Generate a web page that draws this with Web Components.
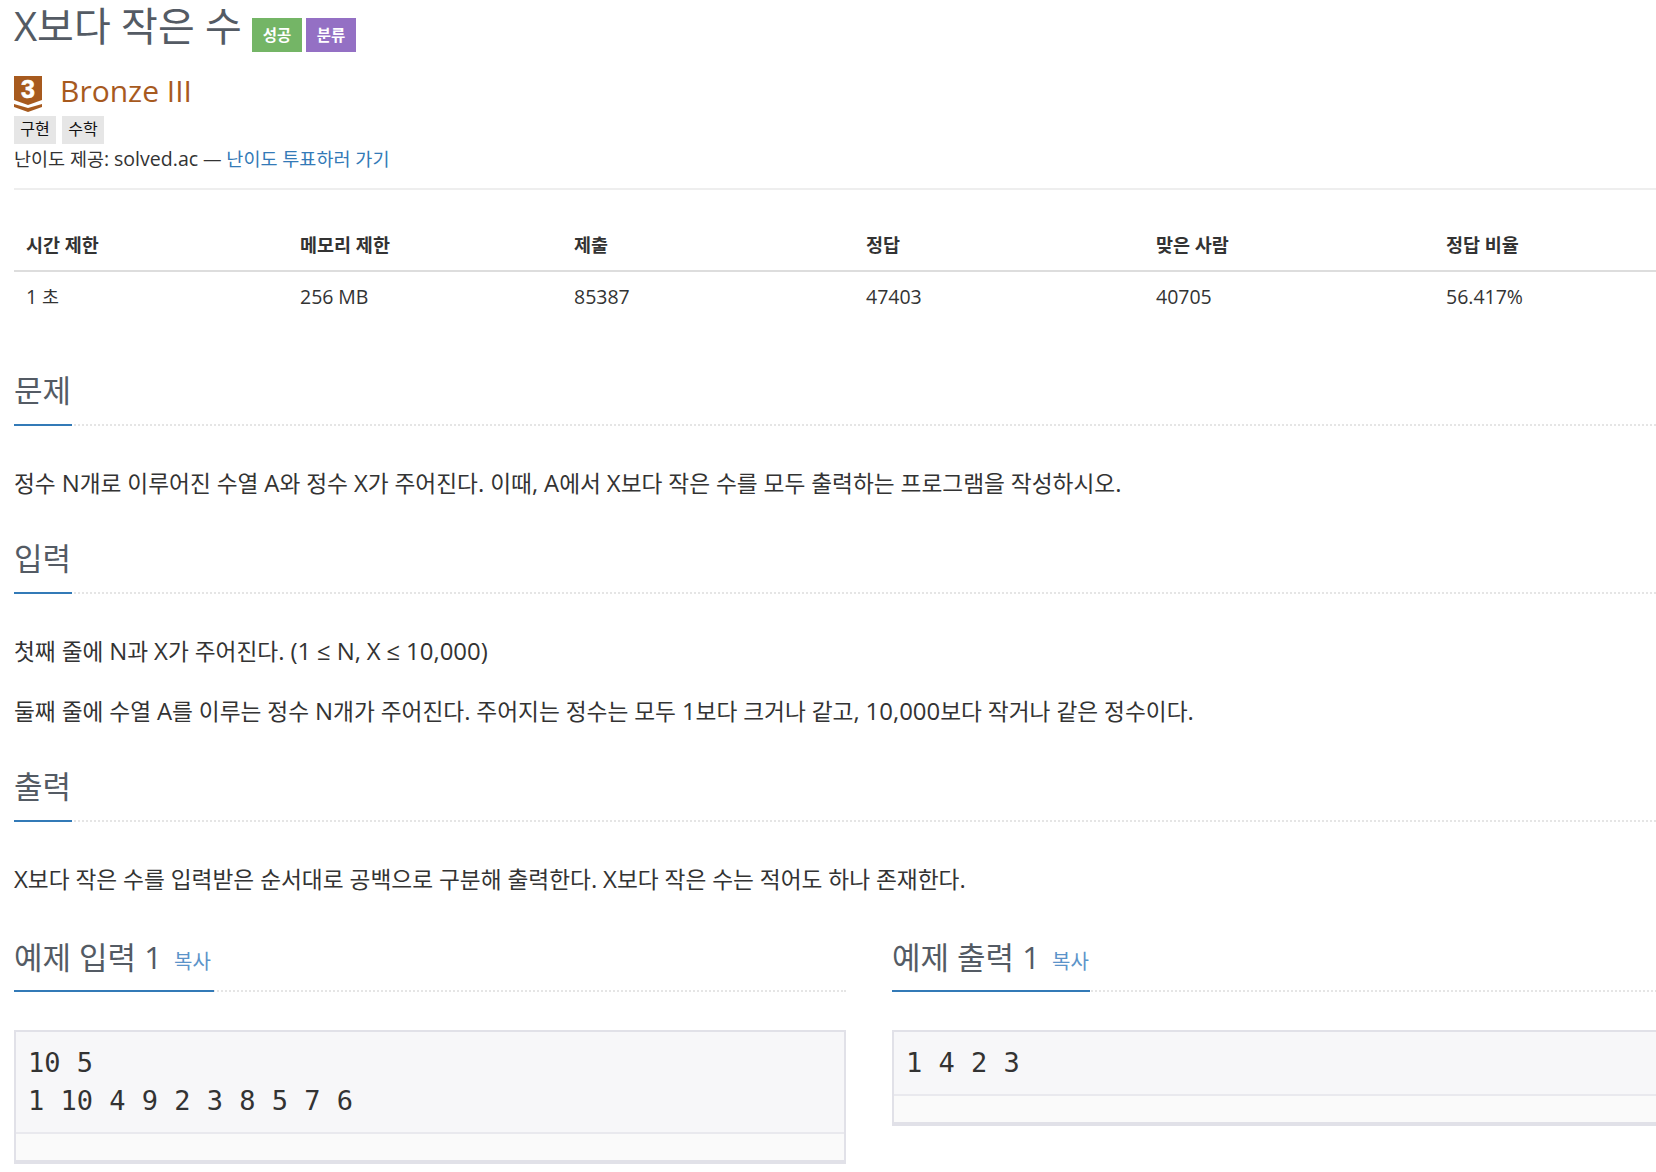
<!DOCTYPE html>
<html>
<head>
<meta charset="utf-8">
<title>X보다 작은 수</title>
<style>
    html, body {
        margin: 0;
        overflow: hidden;
        background: #fff;
    }
    body {
        width: 1710px;
        padding-left: 14px;
        font-family: "Open Sans", "Noto Sans CJK KR", sans-serif;
        color: #333;
    }
</style>
</head>
<body>
<problem-title>X보다 작은 수
    <label-badge color="#74b566">성공</label-badge>
    <label-badge color="#9470c4">분류</label-badge>
</problem-title>
<tier-line>Bronze III</tier-line>
<tag-list>
    <algo-tag>구현</algo-tag>
    <algo-tag>수학</algo-tag>
</tag-list>
<credit-line><latin-text>난이도 제공: solved.ac —</latin-text> <a slot="link">난이도 투표하러 가기</a></credit-line>
<stat-table></stat-table>
<problem-section heading="문제">
    <p><latin-text>정수 N개로 이루어진 수열 A와 정수 X가 주어진다. 이때, A에서 X보다 작은 수를 모두 출력하는 프로그램을 작성하시오.</latin-text></p>
</problem-section>
<problem-section heading="입력">
    <p><latin-text>첫째 줄에 N과 X가 주어진다. (1 ≤ N, X ≤ 10,000)</latin-text></p>
    <p><latin-text>둘째 줄에 수열 A를 이루는 정수 N개가 주어진다. 주어지는 정수는 모두 1보다 크거나 같고, 10,000보다 작거나 같은 정수이다.</latin-text></p>
</problem-section>
<problem-section heading="출력">
    <p><latin-text>X보다 작은 수를 입력받은 순서대로 공백으로 구분해 출력한다. X보다 작은 수는 적어도 하나 존재한다.</latin-text></p>
</problem-section>
<sample-row>
    <sample-box heading="예제 입력 1">10 5
1 10 4 9 2 3 8 5 7 6</sample-box>
    <sample-box heading="예제 출력 1">1 4 2 3</sample-box>
</sample-row>

<script>
    function define(name, html, setup) {
        customElements.define(name, class extends HTMLElement {
            constructor() {
                super();
                let shadowRoot = this.attachShadow({mode: 'open'});
                const t = document.createElement('template');
                t.innerHTML = html;
                shadowRoot.appendChild(t.content.cloneNode(true));
            }
            connectedCallback() {
                if (setup) setup(this, this.shadowRoot);
            }
        });
    }

    // latin runs sit a little larger than the hangul around them
    define('latin-text', `
        <style>
            :host { display: inline; }
            .en { font-size: 1.055em; line-height: 1; }
        </style>
        <span id="out"></span>`,
        (el, root) => {
            root.querySelector('#out').innerHTML = el.textContent.replace(/[A-Za-z0-9.,:%()≤]+/g, '<span class="en">$&</span>');
        });

    define('problem-title', `
        <style>
            :host { display: flex; align-items: flex-start; height: 52px; }
            h1 { margin: 0; font-size: 40px; font-weight: 400; line-height: 52px; color: #545b64; display: flex; }
            .badges { display: flex; gap: 4px; margin: 18px 0 0 10px; }
        </style>
        <h1><slot id="name"></slot></h1>
        <span class="badges"><slot name="badges"></slot></span>`,
        (el) => {
            el.querySelectorAll('label-badge').forEach(b => b.slot = 'badges');
        });

    define('label-badge', `
        <style>
            :host { display: block; width: 50px; height: 34px; text-align: center; font-size: 15.5px; font-weight: 700; line-height: 34px; color: #fff; }
        </style>
        <slot></slot>`,
        (el) => { el.style.background = el.getAttribute('color'); });

    define('tier-line', `
        <style>
            :host { display: flex; align-items: center; gap: 18px; height: 44px; margin-top: 16px; margin-bottom: 4px; color: #a75a1e; font-size: 30px; }
            svg { display: block; width: 28px; height: 36px; flex: none; margin-top: 8px; }
        </style>
        <svg viewBox="0 0 28 36">
            <path fill="#a75a1e" d="M0 0H28V24L14 29L0 24Z"/>
            <path fill="#a75a1e" d="M0 28L14 32L28 28V31L14 36L0 31Z"/>
            <text x="14" y="22" text-anchor="middle" font-family="'Liberation Sans', sans-serif" font-weight="700" font-size="25" stroke="#fff" stroke-width=".6" fill="#fff">3</text>
        </svg>
        <span><slot></slot></span>`);

    define('tag-list', `
        <style>
            :host { display: flex; gap: 6px; }
        </style>
        <slot></slot>`);

    define('algo-tag', `
        <style>
            :host { display: block; width: 42px; height: 28px; background: #e6e6e6; text-align: center; font-size: 16px; line-height: 26px; color: #111; }
        </style>
        <slot></slot>`);

    define('credit-line', `
        <style>
            :host { display: block; height: 27px; padding-top: 1px; font-size: 18.55px; line-height: 28px; color: #333; padding-bottom: 16px; border-bottom: 2px solid #eee; }
            ::slotted(a) { color: #337ab7; }
        </style>
        <slot></slot><slot name="link"></slot>`);

    define('stat-table', `
        <style>
            :host { display: block; margin-top: 30px; margin-bottom: 46px; font-size: 18.5px; color: #333; }
            table { width: 1710px; border-collapse: collapse; table-layout: fixed; }
            th, td { text-align: left; padding: 0 12px; }
            th { height: 48px; padding-bottom: 2px; font-weight: 700; border-bottom: 2px solid #ddd; }
            td { height: 48px; padding-bottom: 2px; }
        </style>
        <table>
            <colgroup><col style="width:274px"><col style="width:274px"><col style="width:292px"><col style="width:290px"><col style="width:290px"><col></colgroup>
            <tr><th>시간 제한</th><th>메모리 제한</th><th>제출</th><th>정답</th><th>맞은 사람</th><th>정답 비율</th></tr>
            <tr><td><latin-text>1 초</latin-text></td><td><latin-text>256 MB</latin-text></td><td><latin-text>85387</latin-text></td><td><latin-text>47403</latin-text></td><td><latin-text>40705</latin-text></td><td><latin-text>56.417%</latin-text></td></tr>
        </table>`);

    const headlineCss = `
        .headline { display: block; position: relative; border-bottom: 2px dotted #e5e5e5; }
        h2 { display: inline-block; margin: 0 0 -2px; padding: 0 1px 12px 0; font-size: 31px; font-weight: 400; line-height: 44px; color: #545b64; border-bottom: 2px solid #337ab7; vertical-align: top; }
    `;

    define('problem-section', `
        <style>
            :host { display: block; margin-top: 34px; }
            :host(:first-of-type) { margin-top: 0; }
            ${headlineCss}
            .body { margin-top: 40px; font-size: 22.7px; line-height: 36px; color: #333; }
            ::slotted(p) { margin: 0 0 24px; }
        </style>
        <div class="headline"><h2></h2></div>
        <div class="body"><slot></slot></div>`,
        (el, root) => { root.querySelector('h2').textContent = el.getAttribute('heading'); });

    define('sample-row', `
        <style>
            :host { display: grid; grid-template-columns: 832px 832px; gap: 46px; margin-top: 36px; }
        </style>
        <slot></slot>`);

    define('sample-box', `
        <style>
            :host { display: block; }
            :host(:last-child) h2 { padding-right: 1px; }
            ${headlineCss}
            h2 { padding: 1px 3px 11px 0; }
            h2 small { font-size: 20px; line-height: 1; color: #5b93c9; margin-left: 4px; }
            .box { margin-top: 38px; border: 2px solid #e1e1e8; background: #f7f7f9; }
            pre { margin: 0; padding: 12px 12px; font-family: "DejaVu Sans Mono", monospace; font-size: 27px; line-height: 38px; color: #333; }
            .foot { height: 26px; background: #fafafa; border-top: 2px solid #e9e9ee; border-bottom: 2px solid #e1e1e8; }
        </style>
        <div class="headline"><h2><span></span> <small>복사</small></h2></div>
        <div class="box"><pre><slot></slot></pre><div class="foot"></div></div>`,
        (el, root) => { root.querySelector('h2 span').textContent = el.getAttribute('heading'); });
</script>
</body>
</html>
